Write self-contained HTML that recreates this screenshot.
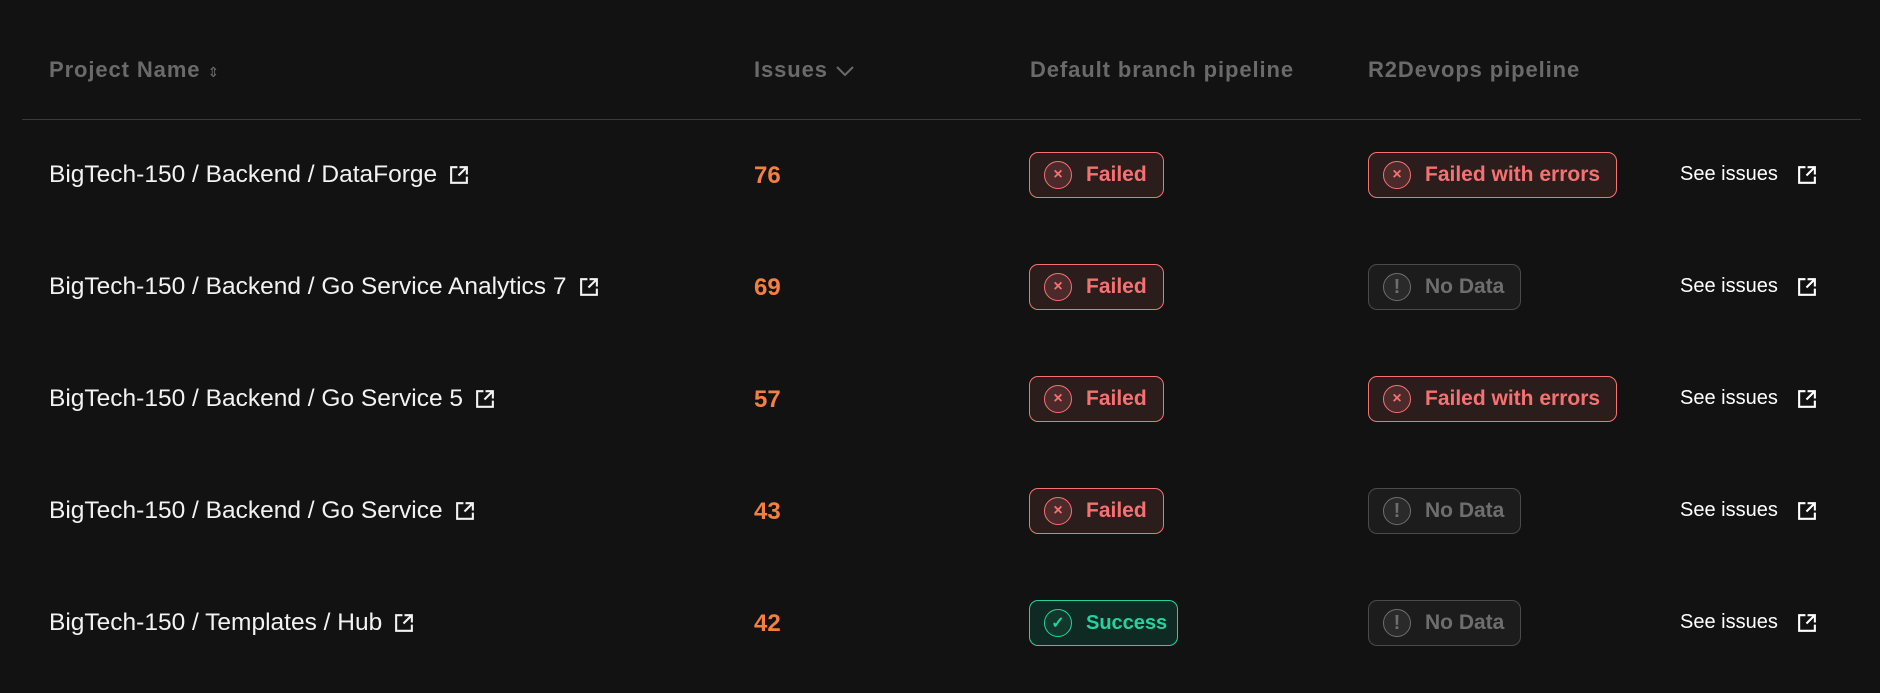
<!DOCTYPE html>
<html><head><meta charset="utf-8"><style>
body{margin:0;width:1880px;height:693px;background:#121212;font-family:"Liberation Sans",sans-serif;overflow:hidden;position:relative}
.a{position:absolute;white-space:nowrap}
.h{top:57px;font-size:22px;font-weight:bold;color:#6a6a6a;letter-spacing:0.9px}
.line{position:absolute;left:22px;width:1839px;top:119px;height:1px;background:#3a3a3a}
.name{left:49px;font-size:24.5px;color:#f2f2f2;display:flex;align-items:center;gap:11px}
.num{left:754px;font-size:24px;font-weight:bold;color:#f4803f}
.badge{height:46px;box-sizing:border-box;border:1px solid;border-radius:9px;display:flex;align-items:center;padding:0 16px 0 14px;font-size:21px;font-weight:bold;gap:14px}
.f{color:#f87171;border-color:#f87171;background:#2c1d1d}
.n{color:#6e6e6e;border-color:#4a4a4a;background:#1c1c1c}
.s{color:#22d3a0;border-color:#22d3a0;background:#0f2a22;padding-right:10px;font-size:20px}
.ic{width:28px;height:28px;box-sizing:border-box;border:1px solid currentColor;border-radius:50%;display:flex;align-items:center;justify-content:center;font-size:16px}
.f .ic{background:#4a2a2a}.n .ic{background:#2a2a2a;font-size:20px}.s .ic{background:#11382b}
.see{left:1680px;font-size:20px;color:#fff;display:flex;align-items:center;gap:18px}
</style></head><body>
<div class="a h" style="left:49px">Project Name <span style="font-size:14px;font-weight:normal">&#8661;</span></div>
<div class="a h" style="left:754px">Issues <svg width="20" height="12" viewBox="0 0 20 12"><path d="M2 2l8 8 8-8" fill="none" stroke="#6a6a6a" stroke-width="2"/></svg></div>
<div class="a h" style="left:1030px">Default branch pipeline</div>
<div class="a h" style="left:1368px">R2Devops pipeline</div>
<div class="line"></div>

<svg width="0" height="0" style="position:absolute"><defs><g id="ext"><path d="M9 3H3v15h15v-6" fill="none" stroke="currentColor" stroke-width="2"/><path d="M11 3h7v7M18 3l-8 8" fill="none" stroke="currentColor" stroke-width="2"/></g></defs></svg>

<div class="a name" style="top:161px">BigTech-150 / Backend / DataForge <svg width="22" height="22" viewBox="0 0 21 21" style="color:#f2f2f2"><use href="#ext"/></svg></div>
<div class="a num" style="top:162px">76</div>
<div class="a badge f" style="left:1029px;top:152px"><span class="ic">×</span>Failed</div>
<div class="a badge f" style="left:1368px;top:152px"><span class="ic">×</span>Failed with errors</div>
<div class="a see" style="top:163px">See issues <svg width="22" height="22" viewBox="0 0 21 21" style="color:#fff"><use href="#ext"/></svg></div>

<div class="a name" style="top:273px">BigTech-150 / Backend / Go Service Analytics 7 <svg width="22" height="22" viewBox="0 0 21 21" style="color:#f2f2f2"><use href="#ext"/></svg></div>
<div class="a num" style="top:274px">69</div>
<div class="a badge f" style="left:1029px;top:264px"><span class="ic">×</span>Failed</div>
<div class="a badge n" style="left:1368px;top:264px"><span class="ic">!</span>No Data</div>
<div class="a see" style="top:275px">See issues <svg width="22" height="22" viewBox="0 0 21 21" style="color:#fff"><use href="#ext"/></svg></div>

<div class="a name" style="top:385px">BigTech-150 / Backend / Go Service 5 <svg width="22" height="22" viewBox="0 0 21 21" style="color:#f2f2f2"><use href="#ext"/></svg></div>
<div class="a num" style="top:386px">57</div>
<div class="a badge f" style="left:1029px;top:376px"><span class="ic">×</span>Failed</div>
<div class="a badge f" style="left:1368px;top:376px"><span class="ic">×</span>Failed with errors</div>
<div class="a see" style="top:387px">See issues <svg width="22" height="22" viewBox="0 0 21 21" style="color:#fff"><use href="#ext"/></svg></div>

<div class="a name" style="top:497px">BigTech-150 / Backend / Go Service <svg width="22" height="22" viewBox="0 0 21 21" style="color:#f2f2f2"><use href="#ext"/></svg></div>
<div class="a num" style="top:498px">43</div>
<div class="a badge f" style="left:1029px;top:488px"><span class="ic">×</span>Failed</div>
<div class="a badge n" style="left:1368px;top:488px"><span class="ic">!</span>No Data</div>
<div class="a see" style="top:499px">See issues <svg width="22" height="22" viewBox="0 0 21 21" style="color:#fff"><use href="#ext"/></svg></div>

<div class="a name" style="top:609px">BigTech-150 / Templates / Hub <svg width="22" height="22" viewBox="0 0 21 21" style="color:#f2f2f2"><use href="#ext"/></svg></div>
<div class="a num" style="top:610px">42</div>
<div class="a badge s" style="left:1029px;top:600px"><span class="ic">✓</span>Success</div>
<div class="a badge n" style="left:1368px;top:600px"><span class="ic">!</span>No Data</div>
<div class="a see" style="top:611px">See issues <svg width="22" height="22" viewBox="0 0 21 21" style="color:#fff"><use href="#ext"/></svg></div>
</body></html>
